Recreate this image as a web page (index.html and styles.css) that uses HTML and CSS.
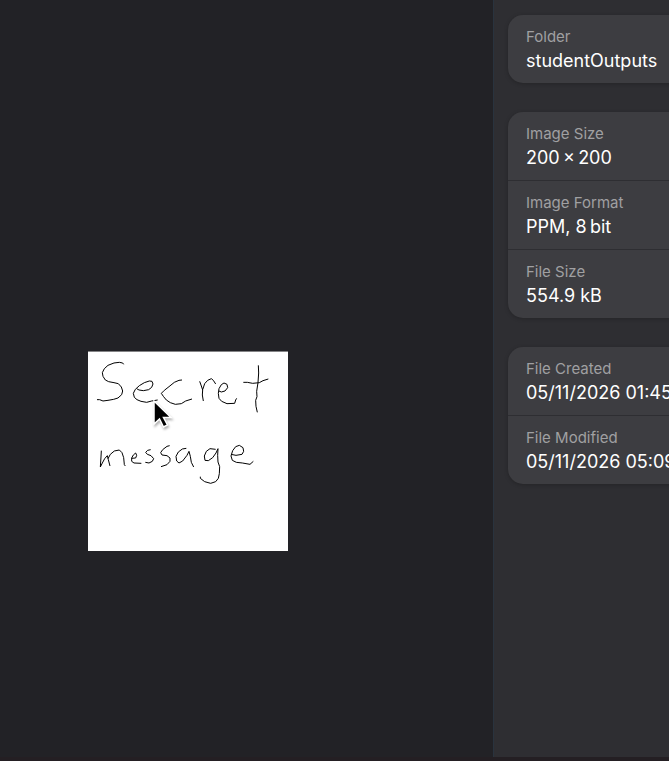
FILE: index.html
```html
<!DOCTYPE html>
<html lang="en">
<head>
<meta charset="utf-8">
<meta name="viewport" content="width=device-width, initial-scale=1">
<title>Image properties</title>
<link rel="stylesheet" href="styles.css">
</head>
<body>
<div class="viewer">
  <main class="canvas">
    <figure class="picture">
      <svg class="drawing" viewBox="0 0 200 200" role="img" aria-label="Handwritten note">
        <path d="M0 .5H200" stroke="#848486"/>
        <g class="ink" transform="translate(0 -1) scale(.33333)">
          <path d="M107 43L104 39L94 37L78 39L60 46L49 56L43 68L45 79L52 90L62 95L78 98L91 101L100 111L104 123L101 134L90 144L77 148L60 151L45 153L35 149L27 149"/>
          <path d="M146 116L153 120L166 122L182 119L191 112L195 102L192 94L184 93L169 98L154 107L142 118L136 130L139 142L147 149L159 154L176 157L191 153L209 150"/>
          <path d="M282 90L273 91L259 97L243 110L229 121L220 130L226 139L235 150L247 158L262 163L280 161L293 153L312 147"/>
          <path d="M335 94L340 108L344 120L343 135L346 153M344 119L350 101L359 91L370 86L376 91L383 102"/>
          <path d="M393 123L400 126L411 123L419 113L417 103L408 99L400 104L393 116L391 130L393 145L401 154L417 161L440 160L443 150L446 145"/>
          <path d="M511 46L512 69L510 98L506 124L507 140L503 151L504 169L508 187M466 97L478 97L494 100L514 98L525 92L541 87"/>
        </g>
        <g class="ink" transform="translate(0 74) scale(.33333)">
          <path d="M40 77L39 96L37 126L43 114L50 101L58 92L61 104L66 123M60 101L67 88L79 78L94 75L102 83L107 98L109 119L112 123"/>
          <path d="M131 100L143 99L146 91L143 84L136 90L131 99L131 109L138 114L160 115"/>
          <path d="M188 74L179 76L173 82L178 88L189 92L197 101L193 109L183 114L172 112"/>
          <path d="M245 62L237 64L224 74L218 83L222 90L237 92L246 99L246 109L237 119L219 125"/>
          <path d="M295 70L283 72L271 81L264 94L266 108L273 114L284 108L297 91L303 79L307 94L310 112L317 126"/>
          <path d="M383 73L366 71L355 79L349 93L351 106L361 107L374 98L384 84L390 71L389 91L390 111L395 125L394 146L391 160L383 170L368 175L350 170L337 160L337 155"/>
          <path d="M429 88L444 91L462 88L467 79L465 68L454 61L443 65L434 77L429 93L433 106L445 112L463 114L486 118L496 109"/>
        </g>
      </svg>
      <svg class="pointer" viewBox="0 0 22 30" aria-hidden="true">
        <path d="M3 2V25L8.500 20L12.500 28L16.500 26L12.500 18.500H20Z" fill="#000" stroke="#fff" stroke-width="1.500"/>
      </svg>
    </figure>
  </main>
  <aside class="sidebar" aria-label="Image details">
    <dl class="card">
      <div class="row"><dt>Folder</dt><dd>studentOutputs</dd></div>
    </dl>
    <dl class="card">
      <div class="row"><dt>Image Size</dt><dd>200&#8201;×&#8201;200</dd></div>
      <div class="row"><dt>Image Format</dt><dd>PPM, 8&#8201;bit</dd></div>
      <div class="row"><dt>File Size</dt><dd>554.9 kB</dd></div>
    </dl>
    <dl class="card">
      <div class="row"><dt>File Created</dt><dd>05/11/2026 01:45</dd></div>
      <div class="row"><dt>File Modified</dt><dd>05/11/2026 05:09</dd></div>
    </dl>
  </aside>
</div>
</body>
</html>
```
FILE: styles.css
```css
* {
  box-sizing: border-box;
}

body {
  margin: 0;
  background: #222226;
  color: #fff;
  font-family: Inter, "Liberation Sans", sans-serif;
  font-optical-sizing: none;
}

.viewer {
  display: grid;
  grid-template-columns: minmax(0, 1fr) 176px;
  min-height: 100vh;
  overflow: hidden;
  border-bottom: 4px solid #241f23;
}

.canvas {
  display: flex;
  align-items: center;
  justify-content: center;
  padding: 145px 117px 0 0;
}

.picture {
  position: relative;
  margin: 0;
  line-height: 0;
}

.drawing {
  width: 200px;
  height: 200px;
  background: #fff;
}

.ink {
  fill: none;
  stroke: #000;
  stroke-width: 3;
  stroke-linejoin: round;
}

/* The pointer lies over the picture. */
.pointer {
  position: absolute;
  left: 63px;
  top: 48px;
  width: 22px;
  height: 30px;
  filter: drop-shadow(1px 2px 1px rgb(0 0 0 / 30%));
}

.sidebar {
  display: flex;
  flex-direction: column;
  gap: 29px;
  padding: 15px 0 15px 14px;
  background: #2e2e32;
  border-left: 1px solid #29333e;
}

.card {
  width: 320px;
  margin: 0;
  border-radius: 15px;
  background: #3d3d41;
  box-shadow: 0 1px 4px rgb(0 0 0 / 22%);
}

.row {
  height: 68px;
  padding: 12px 18px;
  white-space: nowrap;
}

.row + .row {
  height: 69px;
  border-top: 1px solid #2e2e32;
}

dt {
  color: #a0a0a2;
  font-size: 15px;
  line-height: 20px;
}

dd {
  margin: 1px 0 0;
  font-size: 18px;
  line-height: 26px;
}
```
